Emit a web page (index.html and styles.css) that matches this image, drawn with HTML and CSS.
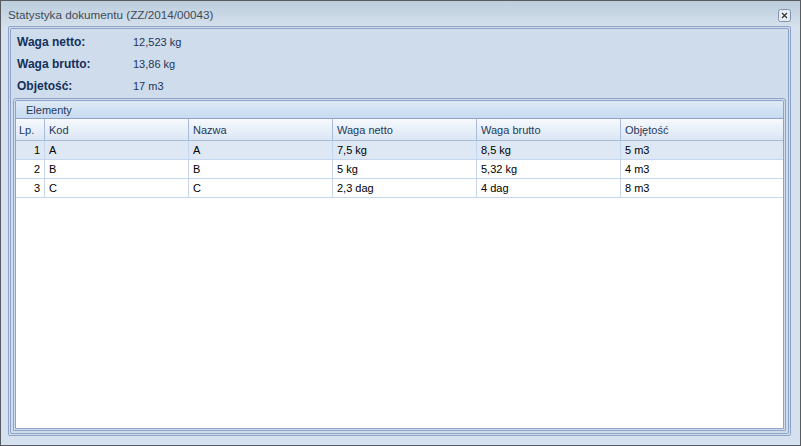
FILE: index.html
```html
<!DOCTYPE html>
<html lang="pl">
<head>
<meta charset="utf-8">
<title>Statystyka dokumentu</title>
<link rel="stylesheet" href="styles.css">
</head>
<body>
<div class="window">
  <div class="titlebar">
    <span class="title">Statystyka dokumentu (ZZ/2014/00043)</span>
    <span class="close">
      <svg width="13" height="13" viewBox="0 0 13 13">
        <rect x="0.5" y="0.5" width="12" height="12" rx="2" fill="#e4ebf3" stroke="#8393ab"/>
        <path d="M4 4 L9 9 M9 4 L4 9" stroke="#ffffff" stroke-width="3"/>
        <path d="M4 4 L9 9 M9 4 L4 9" stroke="#2a2f38" stroke-width="1.3"/>
      </svg>
    </span>
  </div>
  <div class="frame">
    <div class="panel">
      <div class="panel-inner">
        <div class="info">
          <div class="info-row"><span class="label">Waga netto:</span><span class="value">12,523 kg</span></div>
          <div class="info-row"><span class="label">Waga brutto:</span><span class="value">13,86 kg</span></div>
          <div class="info-row"><span class="label">Objetość:</span><span class="value">17 m3</span></div>
        </div>
        <div class="group">
          <div class="group-inner">
            <div class="group-header">Elementy</div>
            <div class="grid">
              <div class="row head">
                <div class="cell">Lp.</div>
                <div class="cell">Kod</div>
                <div class="cell">Nazwa</div>
                <div class="cell">Waga netto</div>
                <div class="cell">Waga brutto</div>
                <div class="cell">Objętość</div>
              </div>
              <div class="row focused">
                <div class="cell num">1</div>
                <div class="cell">A</div>
                <div class="cell">A</div>
                <div class="cell">7,5 kg</div>
                <div class="cell">8,5 kg</div>
                <div class="cell">5 m3</div>
              </div>
              <div class="row">
                <div class="cell num">2</div>
                <div class="cell">B</div>
                <div class="cell">B</div>
                <div class="cell">5 kg</div>
                <div class="cell">5,32 kg</div>
                <div class="cell">4 m3</div>
              </div>
              <div class="row">
                <div class="cell num">3</div>
                <div class="cell">C</div>
                <div class="cell">C</div>
                <div class="cell">2,3 dag</div>
                <div class="cell">4 dag</div>
                <div class="cell">8 m3</div>
              </div>
            </div>
          </div>
        </div>
      </div>
    </div>
  </div>
</div>
</body>
</html>
```
FILE: styles.css
```css
* { box-sizing: border-box; }
html, body { margin: 0; padding: 0; }
body {
  width: 801px;
  height: 446px;
  overflow: hidden;
  font-family: "Liberation Sans", Arial, sans-serif;
  font-size: 11px;
  background: #d5e1ee;
}
.window {
  width: 801px;
  height: 446px;
  border: 1px solid #585b60;
  display: flex;
  flex-direction: column;
  background: #d5e1ee;
}
.titlebar {
  height: 25px;
  flex: none;
  display: flex;
  align-items: center;
  justify-content: space-between;
  padding: 0 9px 0 7px;
  background: linear-gradient(#bccddc, #d4e0ec);
}
.title {
  font-size: 11.7px;
  color: #414b58;
  padding-top: 1px;
}
.close {
  display: flex;
  margin-top: 3px;
}
.frame {
  flex: 1;
  display: flex;
  padding: 0 9px 9px 7px;
}
.panel {
  flex: 1;
  display: flex;
  border: 1px solid #8ea3c5;
  padding: 1px;
  border-radius: 2px;
  background: #cfdcec;
}
.panel-inner {
  flex: 1;
  display: flex;
  flex-direction: column;
  border: 1px solid #8ea3c5;
  border-radius: 2px;
  padding: 2px;
}
.info {
  display: flex;
  flex-direction: column;
  padding-left: 4px;
}
.info-row {
  height: 22px;
  display: flex;
  align-items: center;
  color: #15305a;
}
.label {
  width: 116px;
  font-weight: bold;
  font-size: 12px;
}
.value {
  font-size: 11px;
  color: #1e3558;
}
.group {
  flex: 1;
  display: flex;
  margin-top: 1px;
  border: 1px solid #8ea3c5;
  border-radius: 3px 3px 0 0;
  padding: 1px;
}
.group-inner {
  flex: 1;
  display: flex;
  flex-direction: column;
  border: 1px solid #8ea3c5;
  border-radius: 2px 2px 0 0;
}
.group-header {
  height: 18px;
  flex: none;
  padding-left: 10px;
  display: flex;
  align-items: center;
  color: #1e395b;
  background: linear-gradient(#dde9f7, #c8dbf1);
  border-bottom: 1px solid #8ea3c5;
}
.grid {
  flex: 1;
  background: #ffffff;
}
.row {
  display: grid;
  grid-template-columns: 29px 144px 144px 144px 144px 1fr;
  height: 19px;
  border-bottom: 1px solid #c5d7ee;
  color: #000;
}
.row.head {
  height: 22px;
  color: #1e395b;
  background: linear-gradient(#f6f9fd, #dbe6f4);
  border-bottom: 1px solid #a7bcd9;
}
.row.focused {
  background: #dee8f5;
}
.cell {
  border-right: 1px solid #c5d7ee;
  padding-left: 4px;
  display: flex;
  align-items: center;
  white-space: nowrap;
}
.row.head .cell {
  border-right-color: #a7bcd9;
}
.row.head .cell:first-child {
  padding-left: 3px;
}
.cell:last-child {
  border-right: none;
}
.cell.num {
  justify-content: flex-end;
  padding-left: 0;
  padding-right: 4px;
}
```
